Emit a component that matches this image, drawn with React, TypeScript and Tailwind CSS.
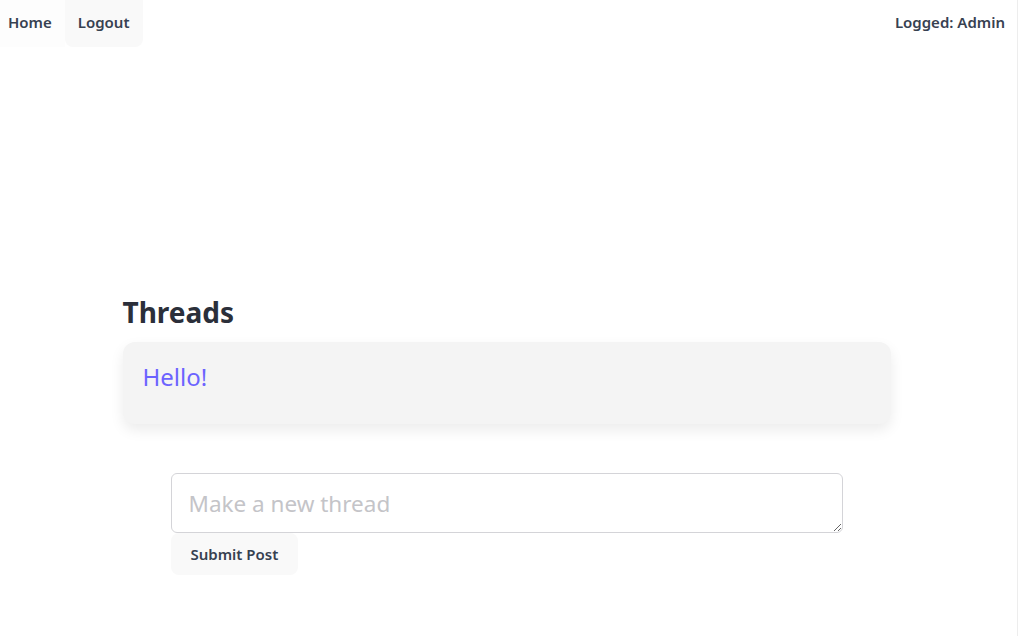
import React from "react";

export default function App() {
  return (
    <div className="w-full h-[636px] bg-white flex font-['Segoe_UI','Noto_Sans',sans-serif] text-[#374151]">
      <div className="flex-1 flex flex-col border-r border-[#ededed]">
        {/* Nav */}
        <nav className="flex items-start justify-between h-[47px]">
          <div className="flex">
            <button className="h-[47px] pl-2 pr-[13px] pb-[3px] bg-[#fdfdfd] text-[15px] font-semibold">
              Home
            </button>
            <button className="h-[47px] px-[13px] pb-[3px] bg-[#f9f9f9] rounded-b-lg text-[15px] font-semibold">
              Logout
            </button>
          </div>
          <span className="h-[47px] flex items-center pb-[3px] pr-[12px] text-[15px] font-semibold">
            Logged: Admin
          </span>
        </nav>

        {/* Threads */}
        <div className="pr-1">
          <main className="w-full max-w-3xl mx-auto mt-[247px]">
            <h1 className="text-[28px] leading-9 font-bold text-[#2b2f3a] mb-[12px]">Threads</h1>
            <div className="bg-[#f4f4f4] rounded-xl shadow-[0_6px_14px_rgba(0,0,0,0.08)] px-5 pt-5 pb-8">
              <span className="block text-[24px] leading-[30px] text-[#6c63ff]">Hello!</span>
            </div>

            {/* New thread form */}
            <form className="px-12 mt-[49px] flex flex-col items-start">
              <textarea
                placeholder="Make a new thread"
                className="w-full h-[60px] border border-[#d4d4d8] rounded-md px-[17px] pt-[14px] pb-[10px] text-[22.5px] leading-[32px] placeholder:text-[#c4c4c8] outline-none"
              />
              <button
                type="button"
                className="h-[42px] px-5 bg-[#f9f9f9] rounded-lg text-[15px] font-semibold"
              >
                Submit Post
              </button>
            </form>
          </main>
        </div>
      </div>
    </div>
  );
}
